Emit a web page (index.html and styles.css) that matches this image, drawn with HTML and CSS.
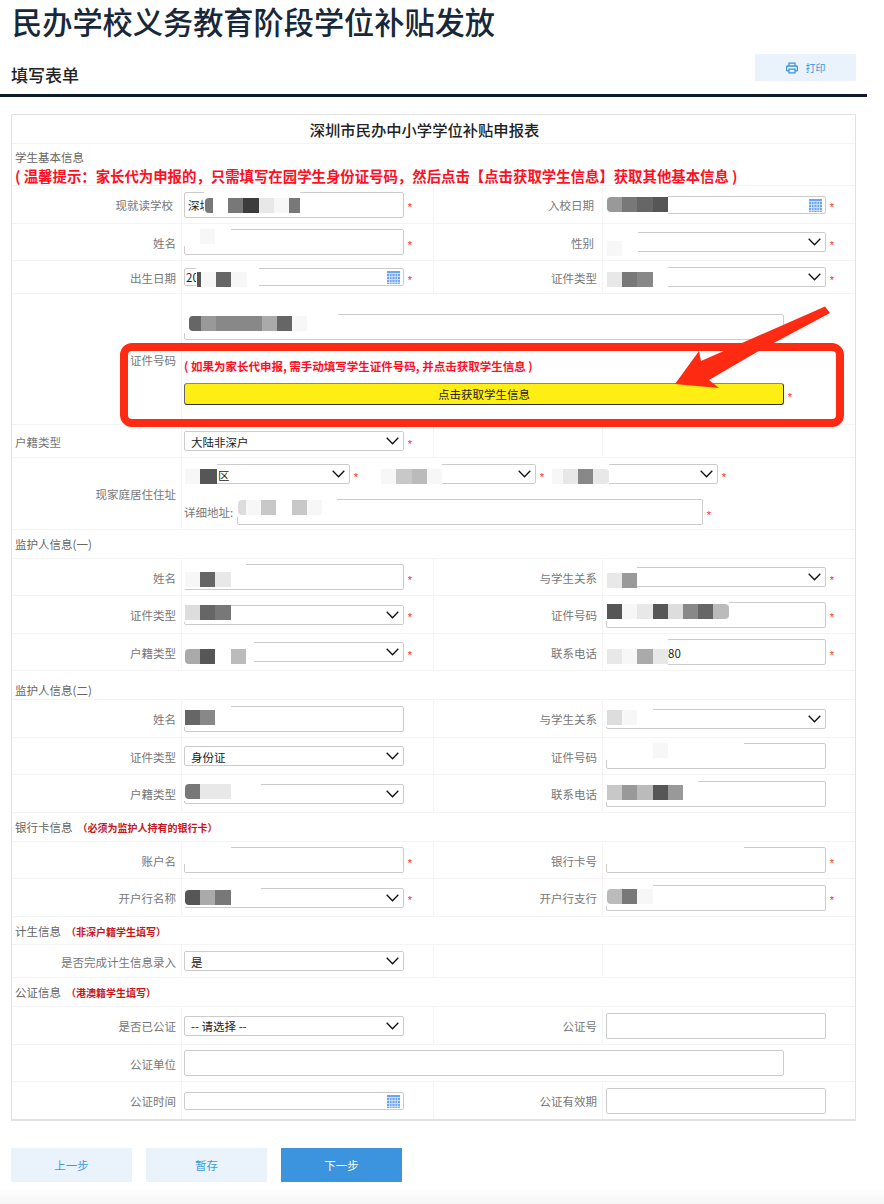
FILE: index.html
```html
<!DOCTYPE html>
<html lang="zh-CN">
<head>
<meta charset="utf-8">
<title>民办学校义务教育阶段学位补贴发放</title>
<link rel="stylesheet" href="styles.css">
</head>
<body>
<div class="page">
  <h1 class="page-title">民办学校义务教育阶段学位补贴发放</h1>
  <div class="subbar">
    <h2 class="subtitle">填写表单</h2>
    <button class="print" type="button">
      <svg class="print-icon" viewBox="0 0 12 12" width="12" height="12"><path d="M3 4V1.2h6V4M3 8.8H1.2a.6.6 0 0 1-.6-.6V5a1 1 0 0 1 1-1h8.800a1 1 0 0 1 1 1v3.200a.6.600 0 0 1-.6.600H9M3 7.200h6v3.600H3z" fill="none" stroke="#3b94dc" stroke-width="1.300"/></svg>
      <span>打印</span>
    </button>
  </div>

  <div class="sheet">
    <div class="sheet-title">深圳市民办中小学学位补贴申报表</div>
    <div class="sec sec-hint">
      <div>学生基本信息</div>
      <div class="tip">( 温馨提示：家长代为申报的，只需填写在园学生身份证号码，然后点击【点击获取学生信息】获取其他基本信息 )</div>
    </div>

    <div class="row h38">
      <div class="lab lab-s">现就读学校</div>
      <div class="val"><div class="field"><input class="ctl" value="深圳"><div class="mos l20 p9"><i class="s8 g7 r"></i><i class="w"></i><i class="g7"></i><i class="g3"></i><i class="ge"></i><i class="gf"></i><i class="s11 g7"></i></div></div><span class="star">*</span></div>
      <div class="lab lab-s">入校日期</div>
      <div class="val vr"><div class="field"><input class="ctl date"><svg class="cal" viewBox="0 0 13 13"><use href="#cal"/></svg><div class="mos p4"><i class="g9 r"></i><i class="g7"></i><i class="g6"></i><i class="g5"></i></div></div><span class="star">*</span></div>
    </div>
    <div class="row h37">
      <div class="lab">姓名</div>
      <div class="val"><div class="field"><input class="ctl"><div class="mos p3"><i class="w"></i><i class="gf"></i><i class="w"></i></div></div><span class="star">*</span></div>
      <div class="lab lab-s">性别</div>
      <div class="val vr"><div class="field"><select class="ctl sel"><option></option></select><div class="mos p12"><i class="gf"></i><i class="w s16"></i></div></div><span class="star">*</span></div>
    </div>
    <div class="row h33">
      <div class="lab">出生日期</div>
      <div class="val"><div class="field"><input class="ctl date" value="20"><svg class="cal" viewBox="0 0 13 13"><use href="#cal"/></svg><div class="mos l12 p7"><i class="s4 g5"></i><i class="gf"></i><i class="g6"></i><i class="gf"></i><i class="s12 w"></i></div></div><span class="star">*</span></div>
      <div class="lab">证件类型</div>
      <div class="val vr"><div class="field"><select class="ctl sel"><option></option></select><div class="mos p8"><i class="ge"></i><i class="g7"></i><i class="g8"></i><i class="w"></i></div></div><span class="star">*</span></div>
    </div>
    <div class="row h131">
      <div class="lab lab-top">证件号码</div>
      <div class="val wide id-box">
        <div class="field field-w"><input class="ctl"><div class="mos p5"><i class="s4 w"></i><i class="s12 g6 r"></i><i class="g9"></i><i class="g8"></i><i class="g8"></i><i class="g8"></i><i class="ga"></i><i class="g6"></i><i class="gf"></i><i class="w"></i><i class="w"></i></div></div>
        <div class="id-note">( 如果为家长代申报, 需手动填写学生证件号码, 并点击获取学生信息 )</div>
        <div class="id-action"><button class="fetch" type="button">点击获取学生信息</button><span class="star">*</span></div>
      </div>
    </div>
    <div class="row h33">
      <div class="lab lab-left">户籍类型</div>
      <div class="val"><div class="field"><select class="ctl sel"><option>大陆非深户</option></select></div><span class="star">*</span></div>
      <div class="lab"></div>
      <div class="val vr"></div>
    </div>
    <div class="row h72">
      <div class="lab">现家庭居住住址</div>
      <div class="val wide addr">
        <div class="trio">
          <div class="pair"><div class="field field-a"><select class="ctl sel ind33"><option>区</option></select><div class="mos p8"><i class="gf"></i><i class="s17 g5"></i></div></div><span class="star">*</span></div>
          <div class="pair"><div class="field field-b"><select class="ctl sel"><option></option></select><div class="mos p8"><i class="w"></i><i class="gf"></i><i class="gc"></i><i class="gb"></i><i class="gf"></i></div></div><span class="star">*</span></div>
          <div class="pair"><div class="field field-c"><select class="ctl sel"><option></option></select><div class="mos p8"><i class="s11 gf"></i><i class="ge"></i><i class="g8"></i><i class="ge r2"></i></div></div><span class="star">*</span></div>
        </div>
        <div class="addr-line"><span class="addr-label">详细地址:</span><div class="field field-d"><input class="ctl"><div class="mos p4"><i class="s8 gd r"></i><i class="gf"></i><i class="gc"></i><i class="w"></i><i class="gc"></i><i class="gf"></i><i class="w"></i></div></div><span class="star">*</span></div>
      </div>
    </div>

    <div class="sec">监护人信息(一)</div>
    <div class="row h37">
      <div class="lab">姓名</div>
      <div class="val"><div class="field"><input class="ctl"><div class="mos p11"><i class="gf"></i><i class="g6"></i><i class="ge"></i><i class="w"></i></div></div><span class="star">*</span></div>
      <div class="lab">与学生关系</div>
      <div class="val vr"><div class="field"><select class="ctl sel"><option></option></select><div class="mos p9"><i class="ge"></i><i class="g9"></i></div></div><span class="star">*</span></div>
    </div>
    <div class="row h38">
      <div class="lab">证件类型</div>
      <div class="val"><div class="field"><select class="ctl sel"><option></option></select><div class="mos p3"><i class="gd"></i><i class="g6"></i><i class="g7"></i></div></div><span class="star">*</span></div>
      <div class="lab">证件号码</div>
      <div class="val vr"><div class="field"><input class="ctl"><div class="mos p5"><i class="g5"></i><i class="gf"></i><i class="ge"></i><i class="g5"></i><i class="gd"></i><i class="g8"></i><i class="g6"></i><i class="gb r2"></i></div></div><span class="star">*</span></div>
    </div>
    <div class="row h37">
      <div class="lab">户籍类型</div>
      <div class="val"><div class="field"><select class="ctl sel"><option></option></select><div class="mos p10"><i class="ga r"></i><i class="g5"></i><i class="w"></i><i class="gb"></i><i class="s8 w"></i></div></div><span class="star">*</span></div>
      <div class="lab">联系电话</div>
      <div class="val vr"><div class="field"><input class="ctl ind60" value="80"><div class="mos p13"><i class="ge"></i><i class="gf"></i><i class="ga"></i><i class="ge"></i></div></div><span class="star">*</span></div>
    </div>

    <div class="sec sec-low">监护人信息(二)</div>
    <div class="row h38">
      <div class="lab">姓名</div>
      <div class="val"><div class="field"><input class="ctl"><div class="mos p7"><i class="g6"></i><i class="g8"></i><i class="w"></i></div></div></div>
      <div class="lab">与学生关系</div>
      <div class="val vr"><div class="field"><select class="ctl sel"><option></option></select><div class="mos p4"><i class="gd"></i><i class="gf"></i><i class="w"></i></div></div></div>
    </div>
    <div class="row h37">
      <div class="lab">证件类型</div>
      <div class="val"><div class="field"><select class="ctl sel"><option>身份证</option></select></div></div>
      <div class="lab">证件号码</div>
      <div class="val vr"><div class="field"><input class="ctl"><div class="mos p3"><i class="w"></i><i class="w"></i><i class="w"></i><i class="gf"></i><i class="w"></i><i class="w"></i><i class="w"></i><i class="w"></i><i class="w"></i></div></div></div>
    </div>
    <div class="row h38">
      <div class="lab">户籍类型</div>
      <div class="val"><div class="field"><select class="ctl sel"><option></option></select><div class="mos p3"><i class="g7 r"></i><i class="ge"></i><i class="ge"></i><i class="w"></i><i class="w"></i></div></div></div>
      <div class="lab">联系电话</div>
      <div class="val vr"><div class="field"><input class="ctl"><div class="mos p7"><i class="gc"></i><i class="g9"></i><i class="gb"></i><i class="g5"></i><i class="g9"></i><i class="w"></i></div></div></div>
    </div>

    <div class="sec">银行卡信息<span class="sec-note">（必须为监护人持有的银行卡）</span></div>
    <div class="row h37">
      <div class="lab">账户名</div>
      <div class="val"><div class="field"><input class="ctl"><div class="mos p3"><i class="w"></i><i class="w"></i><i class="w"></i></div></div><span class="star">*</span></div>
      <div class="lab">银行卡号</div>
      <div class="val vr"><div class="field"><input class="ctl"><div class="mos p3"><i class="w"></i><i class="w"></i><i class="w"></i><i class="w"></i><i class="w"></i><i class="w"></i><i class="w"></i><i class="w"></i><i class="w"></i></div></div><span class="star">*</span></div>
    </div>
    <div class="row h38">
      <div class="lab">开户行名称</div>
      <div class="val"><div class="field"><select class="ctl sel"><option></option></select><div class="mos p5"><i class="g5 r"></i><i class="ga"></i><i class="g7"></i><i class="w"></i><i class="w"></i></div></div><span class="star">*</span></div>
      <div class="lab">开户行支行</div>
      <div class="val vr"><div class="field"><input class="ctl"><div class="mos p7"><i class="gb r"></i><i class="g7"></i><i class="gf"></i></div></div><span class="star">*</span></div>
    </div>

    <div class="sec h28">计生信息<span class="sec-note">（非深户籍学生填写）</span></div>
    <div class="row h33">
      <div class="lab">是否完成计生信息录入</div>
      <div class="val"><div class="field"><select class="ctl sel"><option>是</option></select></div></div>
      <div class="lab"></div>
      <div class="val vr"></div>
    </div>

    <div class="sec">公证信息<span class="sec-note">（港澳籍学生填写）</span></div>
    <div class="row h38">
      <div class="lab">是否已公证</div>
      <div class="val"><div class="field"><select class="ctl sel"><option>-- 请选择 --</option></select></div></div>
      <div class="lab">公证号</div>
      <div class="val vr"><div class="field"><input class="ctl"></div></div>
    </div>
    <div class="row h37">
      <div class="lab">公证单位</div>
      <div class="val wide"><div class="field field-w"><input class="ctl"></div></div>
    </div>
    <div class="row h37 last">
      <div class="lab">公证时间</div>
      <div class="val"><div class="field"><input class="ctl date"><svg class="cal" viewBox="0 0 13 13"><use href="#cal"/></svg></div></div>
      <div class="lab">公证有效期</div>
      <div class="val vr"><div class="field"><input class="ctl"></div></div>
    </div>
  </div>

  <div class="actions">
    <button class="act" type="button">上一步</button>
    <button class="act" type="button">暂存</button>
    <button class="act act-primary" type="button">下一步</button>
  </div>
</div>
<div class="foot"></div>

<svg class="defs" width="0" height="0"><symbol id="cal" viewBox="0 0 13 13"><rect width="13" height="13" fill="#6ea6f6"/><path d="M0 2.500h13M0 5.500h13M0 8.500h13M0 11.500h13M2.500 2v11M5 2v11M8 2v11M10.500 2v11" stroke="#dbe8fd" stroke-width=".8" fill="none"/></symbol></svg>

<svg class="mark" viewBox="0 0 884 1204" width="884" height="1204">
  <rect x="124" y="347" width="716" height="76" rx="8" fill="none" stroke="#ff2a12" stroke-width="8"/>
  <polygon points="825,306.500 830,313 757,352 709,380 719,388 675,384 699,351 701,361" fill="#ff2a12"/>
</svg>
</body>
</html>
```
FILE: styles.css
```css
* { box-sizing: border-box; }
html, body { margin: 0; padding: 0; background: #fff; }
body {
  position: relative;
  width: 884px;
  height: 1204px;
  overflow: hidden;
  font-family: "Noto Sans CJK SC", "Liberation Sans", sans-serif;
  font-size: 11.500px;
  color: #777;
}
.page { width: 867px; }
.page-title {
  margin: 0;
  padding-left: 12px;
  height: 44px;
  font-size: 30.200px;
  line-height: 43px;
  font-weight: 500;
  color: #17283a;
}
.subbar {
  display: flex;
  justify-content: space-between;
  height: 53px;
  padding: 10px 11px 0;
  border-bottom: 3px solid #0d1b2a;
}
.subtitle {
  margin: 10px 0 0;
  font-size: 17px;
  line-height: 22px;
  font-weight: 500;
  color: #222;
}
.print {
  display: flex;
  align-items: center;
  justify-content: center;
  gap: 8px;
  width: 101px;
  height: 27px;
  border: 0;
  background: #eaf3fb;
  color: #3b94dc;
  font: inherit;
  font-size: 10px;
}
.print-icon { flex: none; }

.sheet {
  margin: 17px 0 0 11px;
  width: 845px;
  border: 1px solid #e2e2e2;
  border-bottom-width: 2px;
}
.sheet-title {
  height: 29px;
  padding-right: 18px;
  line-height: 28px;
  text-align: center;
  font-size: 15.300px;
  font-weight: 500;
  color: #222;
  border-bottom: 1px solid #f4f4f4;
}
.sec {
  height: 29px;
  padding: 0 0 0 3px;
  line-height: 29px;
  color: #666;
  border-bottom: 1px solid #f4f4f4;
}
.sec.h28 { height: 28px; }
.sec-low { line-height: 38px; }
.sec-hint { height: 42px; padding-top: 5px; line-height: 16px; }
.tip {
  margin-top: 3px;
  font-size: 14.400px;
  line-height: 16px;
  font-weight: 700;
  color: #ff0f1f;
  white-space: nowrap;
}
.sec-note {
  margin-left: 5px;
  font-size: 10px;
  font-weight: 700;
  color: #c8141a;
}

.row {
  display: grid;
  grid-template-columns: 170px 252px 169px 252px;
  border-bottom: 1px solid #f4f4f4;
}
.row.last { border-bottom: 0; }
.h33 { height: 33px; }
.h37 { height: 37px; }
.h38 { height: 38px; }
.h72 { height: 72px; }
.h131 { height: 131px; }

.lab {
  display: flex;
  align-items: center;
  justify-content: flex-end;
  padding-top: 1px;
  padding-right: 5px;
  border-right: 1px solid #f4f4f4;
  white-space: nowrap;
}
.lab-s { padding-right: 8px; }
.lab-top { align-items: flex-start; padding-top: 58px; }
.lab-left { justify-content: flex-start; padding-left: 3px; }
.val {
  display: flex;
  align-items: center;
  padding-left: 2px;
  border-right: 1px solid #f4f4f4;
}
.val.vr { padding-left: 3px; border-right: 0; }
.val.wide { grid-column: span 3; border-right: 0; }

.field { position: relative; flex: none; width: 220px; }
.field-w { width: 600px; }
.field-a { width: 166px; }
.field-b { width: 171px; }
.field-c { width: 167px; }
.field-d { width: 466px; }

.ctl {
  display: block;
  width: 100%;
  height: 26px;
  padding: 1px 3px 0;
  border: 1px solid #ccc;
  border-radius: 2px;
  background-color: #fff;
  font: inherit;
  color: #222;
  outline: 0;
}
.date { height: 18px; padding: 0 1px; }
.sel {
  height: 20px;
  padding: 1px 0 0 6px;
  appearance: none;
  -webkit-appearance: none;
  background-image: url("data:image/svg+xml,%3Csvg xmlns='http://www.w3.org/2000/svg' width='13' height='8'%3E%3Cpath d='M.7.800 6.500 6.800 12.300.800' fill='none' stroke='%23111' stroke-width='1.300'/%3E%3C/svg%3E");
  background-repeat: no-repeat;
  background-position: right 4px center;
}
.sel.ind33 { padding-left: 33px; }
.ind60 { padding-left: 61px; }

.cal { position: absolute; top: 3px; right: 4px; width: 13px; height: 13px; }
.defs { position: absolute; }

.star {
  flex: none;
  width: 6px;
  margin-left: 3px;
  padding-top: 5px;
  font-family: "Liberation Sans", sans-serif;
  font-size: 11px;
  line-height: 12px;
  text-align: center;
  color: #ff1f1f;
}

.mos {
  position: absolute;
  top: -3px;
  left: 0;
  display: flex;
  padding-left: 1px;
  padding-bottom: 2px;
  background: #fff;
}
.mos i { display: block; flex: none; width: 15.200px; height: 15px; }
.l12 { left: 12px; }
.l20 { left: 20px; }
.p3 { padding-top: 3px; }
.p4 { padding-top: 4px; }
.p5 { padding-top: 5px; }
.p7 { padding-top: 7px; }
.p8 { padding-top: 8px; }
.p9 { padding-top: 9px; }
.p10 { padding-top: 10px; }
.p11 { padding-top: 11px; }
.p12 { padding-top: 12px; }
.p13 { padding-top: 13px; }
.mos i.s4 { width: 4px; }
.mos i.s8 { width: 8px; }
.mos i.s11 { width: 11px; }
.mos i.s12 { width: 12px; }
.mos i.s16 { width: 16px; }
.mos i.s17 { width: 17px; }
.mos i.r { border-radius: 4px 0 0 4px; }
.mos i.r2 { border-radius: 0 4px 4px 0; }
.g3 { background: #3c3c3c; }
.g5 { background: #565656; }
.g6 { background: #666; }
.g7 { background: #787878; }
.g8 { background: #888; }
.g9 { background: #999; }
.ga { background: #aaa; }
.gb { background: #bbb; }
.gc { background: #c8c8c8; }
.gd { background: #ddd; }
.ge { background: #e8e8e8; }
.gf { background: #f7f7f7; }
.w { background: #fff; }

.id-box { flex-direction: column; align-items: flex-start; padding-top: 20px; }
.id-note {
  margin-top: 18px;
  height: 16px;
  font-size: 11.500px;
  line-height: 16px;
  font-weight: 700;
  color: #ff0f1f;
  white-space: nowrap;
}
.id-action { display: flex; align-items: center; margin-top: 9px; }
.fetch {
  width: 600px;
  height: 22px;
  padding: 0;
  border: 1px solid #333;
  border-top-color: #888;
  border-left-color: #666;
  border-radius: 3px;
  background: #ffee14;
  font: inherit;
  color: #222;
}

.addr { flex-direction: column; align-items: flex-start; padding-top: 6px; }
.trio { display: flex; gap: 6px; }
.pair { display: flex; align-items: center; }
.addr-line { display: flex; align-items: center; margin-top: 15px; }
.addr-label { width: 53px; white-space: nowrap; }

.actions { display: flex; gap: 14px; margin: 27px 0 0 11px; }
.act {
  width: 121px;
  height: 34px;
  border: 0;
  background: #eaf3fb;
  color: #3f9ae0;
  font: inherit;
}
.act-primary { background: #3d94de; color: #fff; }

.foot {
  position: absolute;
  left: 0;
  right: 0;
  bottom: 0;
  height: 16px;
  background: linear-gradient(#fff, #f6f6f6);
}
.mark { position: absolute; top: 0; left: 0; pointer-events: none; }
```
